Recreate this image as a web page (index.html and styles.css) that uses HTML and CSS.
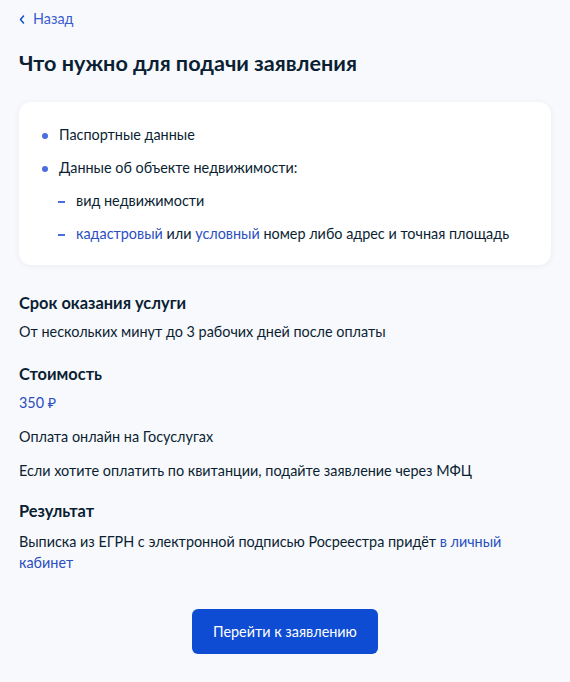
FILE: index.html
```html
<!DOCTYPE html>
<html lang="ru">
<head>
<meta charset="utf-8">
<link rel="stylesheet" href="styles.css">
</head>
<body>
<div class="page">
  <a class="back" href="#">
    <svg class="chev" width="6" height="9" viewBox="0 0 6 9"><path d="M4.5 1 L1.5 4.5 L4.5 8" fill="none" stroke="#0d4cd3" stroke-width="1.5" stroke-linecap="round" stroke-linejoin="round"/></svg>
    <span>Назад</span>
  </a>
  <h1 class="title">Что нужно для подачи заявления</h1>
  <div class="card">
    <ul class="list">
      <li class="dot">Паспортные данные</li>
      <li class="dot">Данные об объекте недвижимости:</li>
      <li class="dash">вид недвижимости</li>
      <li class="dash"><a href="#">кадастровый</a> или <a href="#">условный</a> номер либо адрес и точная площадь</li>
    </ul>
  </div>
  <section class="sec">
    <h2>Срок оказания услуги</h2>
    <p>От нескольких минут до 3 рабочих дней после оплаты</p>
  </section>
  <section class="sec">
    <h2>Стоимость</h2>
    <p class="price">350 ₽</p>
    <p>Оплата онлайн на Госуслугах</p>
    <p>Если хотите оплатить по квитанции, подайте заявление через МФЦ</p>
  </section>
  <section class="sec">
    <h2>Результат</h2>
    <p class="wrap">Выписка из ЕГРН с электронной подписью Росреестра придёт <a href="#">в личный</a> <a href="#">кабинет</a></p>
  </section>
  <div class="actions">
    <button class="btn">Перейти к заявлению</button>
  </div>
</div>
</body>
</html>
```
FILE: styles.css
```css
html, body {
  margin: 0;
  padding: 0;
  background: #f8f9fc;
}
body {
  font-family: Lato, "Noto Sans", sans-serif;
  color: #0b1f33;
  font-size: 14.4px;
}
a { color: #0d4cd3; text-decoration: none; }
.page {
  padding: 9px 19px 0 19px;
}
.back {
  display: flex;
  align-items: center;
  gap: 8px;
  font-size: 14.4px;
  line-height: 20px;
  color: #0d4cd3;
}
.back span { color: #3a5bd0; }
.title {
  margin: 20px 0 0 0;
  font-size: 21.6px;
  line-height: 28px;
  font-weight: 700;
  color: #0b1f33;
}
.card {
  margin-top: 25px;
  background: #fff;
  border-radius: 12px;
  box-shadow: 0 1px 6px rgba(11, 31, 51, 0.06);
  padding: 23px 23px 21px 23px;
}
.list {
  list-style: none;
  margin: 0;
  padding: 0;
  display: flex;
  flex-direction: column;
  gap: 13px;
}
.list li {
  position: relative;
  line-height: 20px;
  padding-left: 17px;
}
.list li.dot::before {
  content: "";
  position: absolute;
  left: 0;
  top: 8px;
  width: 6px;
  height: 6px;
  border-radius: 50%;
  background: #4a6ee0;
}
.list li.dash { padding-left: 34px; }
.list li.dash::before {
  content: "";
  position: absolute;
  left: 16px;
  top: 10px;
  width: 7px;
  height: 2px;
  background: #4a6ee0;
}
.list a { color: #2a4fbf; }
.sec { margin-top: 26px; }
.sec + .sec { margin-top: 20px; }
.sec:last-of-type { margin-top: 18px; }
.sec h2 {
  margin: 0;
  font-size: 16.4px;
  line-height: 24px;
  font-weight: 700;
}
.sec p {
  margin: 7px 0 0 0;
  line-height: 20px;
}
.sec p + p { margin-top: 14px; }
.sec .price { color: #2a4fbf; margin-top: 7px; }
.sec .wrap { max-width: 500px; line-height: 21px; margin-top: 8px; }
.wrap a { color: #2a4fbf; }
.actions {
  display: flex;
  justify-content: center;
  margin-top: 36px;
}
.btn {
  width: 186px;
  height: 45px;
  border: 0;
  border-radius: 6px;
  background: #0d4cd3;
  color: #fff;
  font-family: Lato, "Noto Sans", sans-serif;
  font-size: 14.4px;
  cursor: pointer;
}
```
